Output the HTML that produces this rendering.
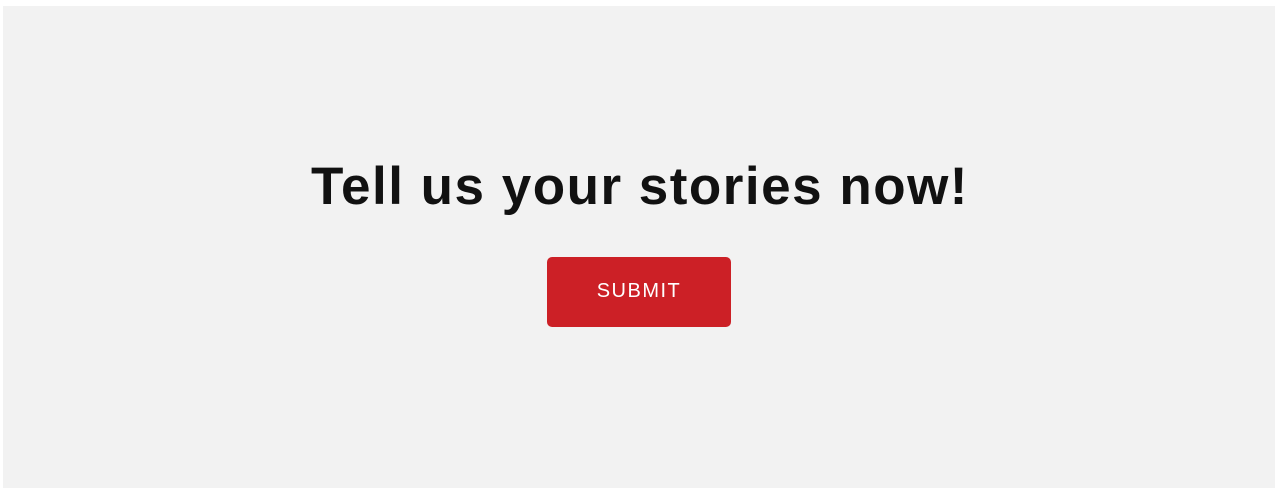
<!DOCTYPE html>
<html><head><style>
body{margin:0;background:#fff;width:1280px;height:491px;overflow:hidden;font-family:"Liberation Sans",sans-serif}
.box{position:absolute;left:3px;top:6px;width:1272px;height:482px;background:#f2f2f2}
h1{position:absolute;left:0;width:1280px;top:150px;margin:0;text-align:center;font-size:53px;font-weight:bold;color:#111;letter-spacing:1.5px;line-height:74px}
.btn{position:absolute;left:547px;top:257px;width:184px;height:70px;background:#cc2026;border-radius:5px;color:#fff;font-size:20px;letter-spacing:1.5px;text-align:center;line-height:68px}
</style></head><body>
<div class="box"></div>
<h1>Tell us your stories now!</h1>
<div class="btn">SUBMIT</div>
</body></html>
